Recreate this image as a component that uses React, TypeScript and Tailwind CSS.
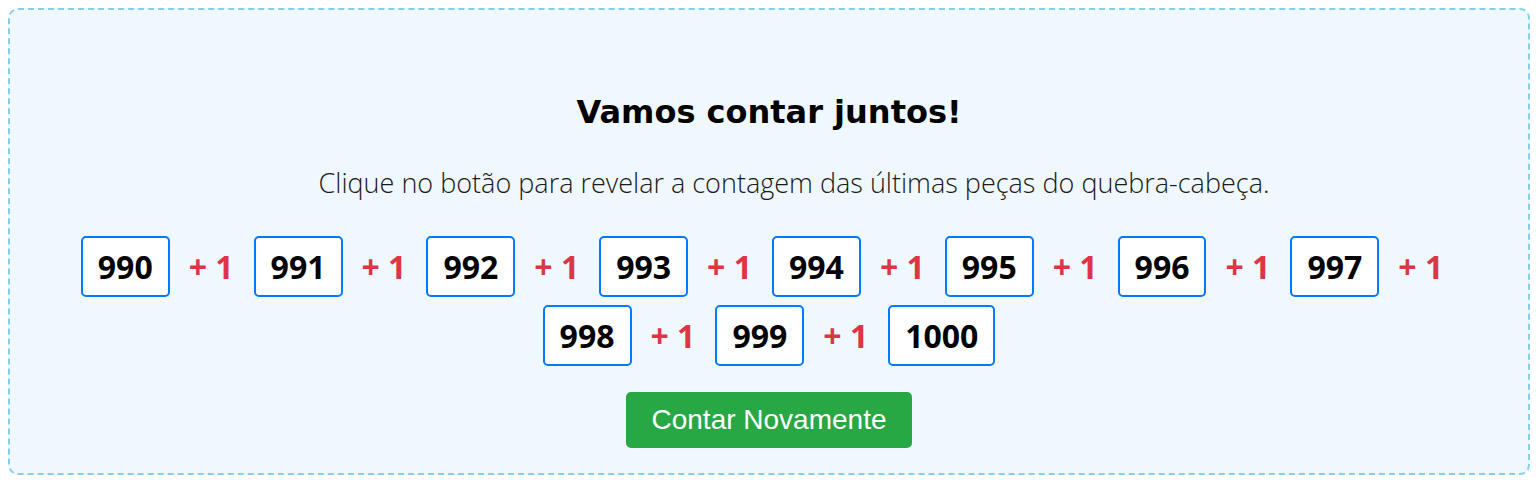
import React from "react";

const numbers = [990, 991, 992, 993, 994, 995, 996, 997, 998, 999, 1000];

export default function App() {
  return (
    <div className="m-2 rounded-[10px] border-2 border-dashed border-[#87ceeb] bg-[#f0f8ff] px-5 pt-[82px] pb-[25px] text-center">
      {/* Title */}
      <h2 className="font-['DejaVu_Sans',sans-serif] text-[32px] font-bold leading-[40px] text-black">
        Vamos contar juntos!
      </h2>

      {/* Subtitle */}
      <p className="mt-[32px] pl-[50px] font-['Open_Sans',sans-serif] text-[27px] font-light leading-[37px] text-[#1a1a1a]">
        Clique no botão para revelar a contagem das últimas peças do quebra-cabeça.
      </p>

      {/* Counting row: each number keeps its "+ 1" on the same line */}
      <div className="mt-[35px] flex flex-wrap items-center justify-center gap-y-2 font-['Open_Sans',sans-serif]">
        {numbers.map((n, i) => (
          <div key={n} className="flex items-center">
            <span className="mx-[3px] rounded-[5px] border-2 border-[#007bff] bg-white px-[15px] py-[8px] text-[32px] font-bold leading-[41px] text-black">
              {n}
            </span>
            {i < numbers.length - 1 && (
              <span className="ml-[16px] mr-[17px] text-[32px] font-bold leading-[41px] text-[#dc3545]">
                + 1
              </span>
            )}
          </div>
        ))}
      </div>

      {/* Button */}
      <button className="mt-[26px] rounded-[5px] bg-[#28a745] px-[25px] py-[12px] font-['Liberation_Sans',Arial,sans-serif] text-[28px] leading-[32px] text-white">
        Contar Novamente
      </button>
    </div>
  );
}
